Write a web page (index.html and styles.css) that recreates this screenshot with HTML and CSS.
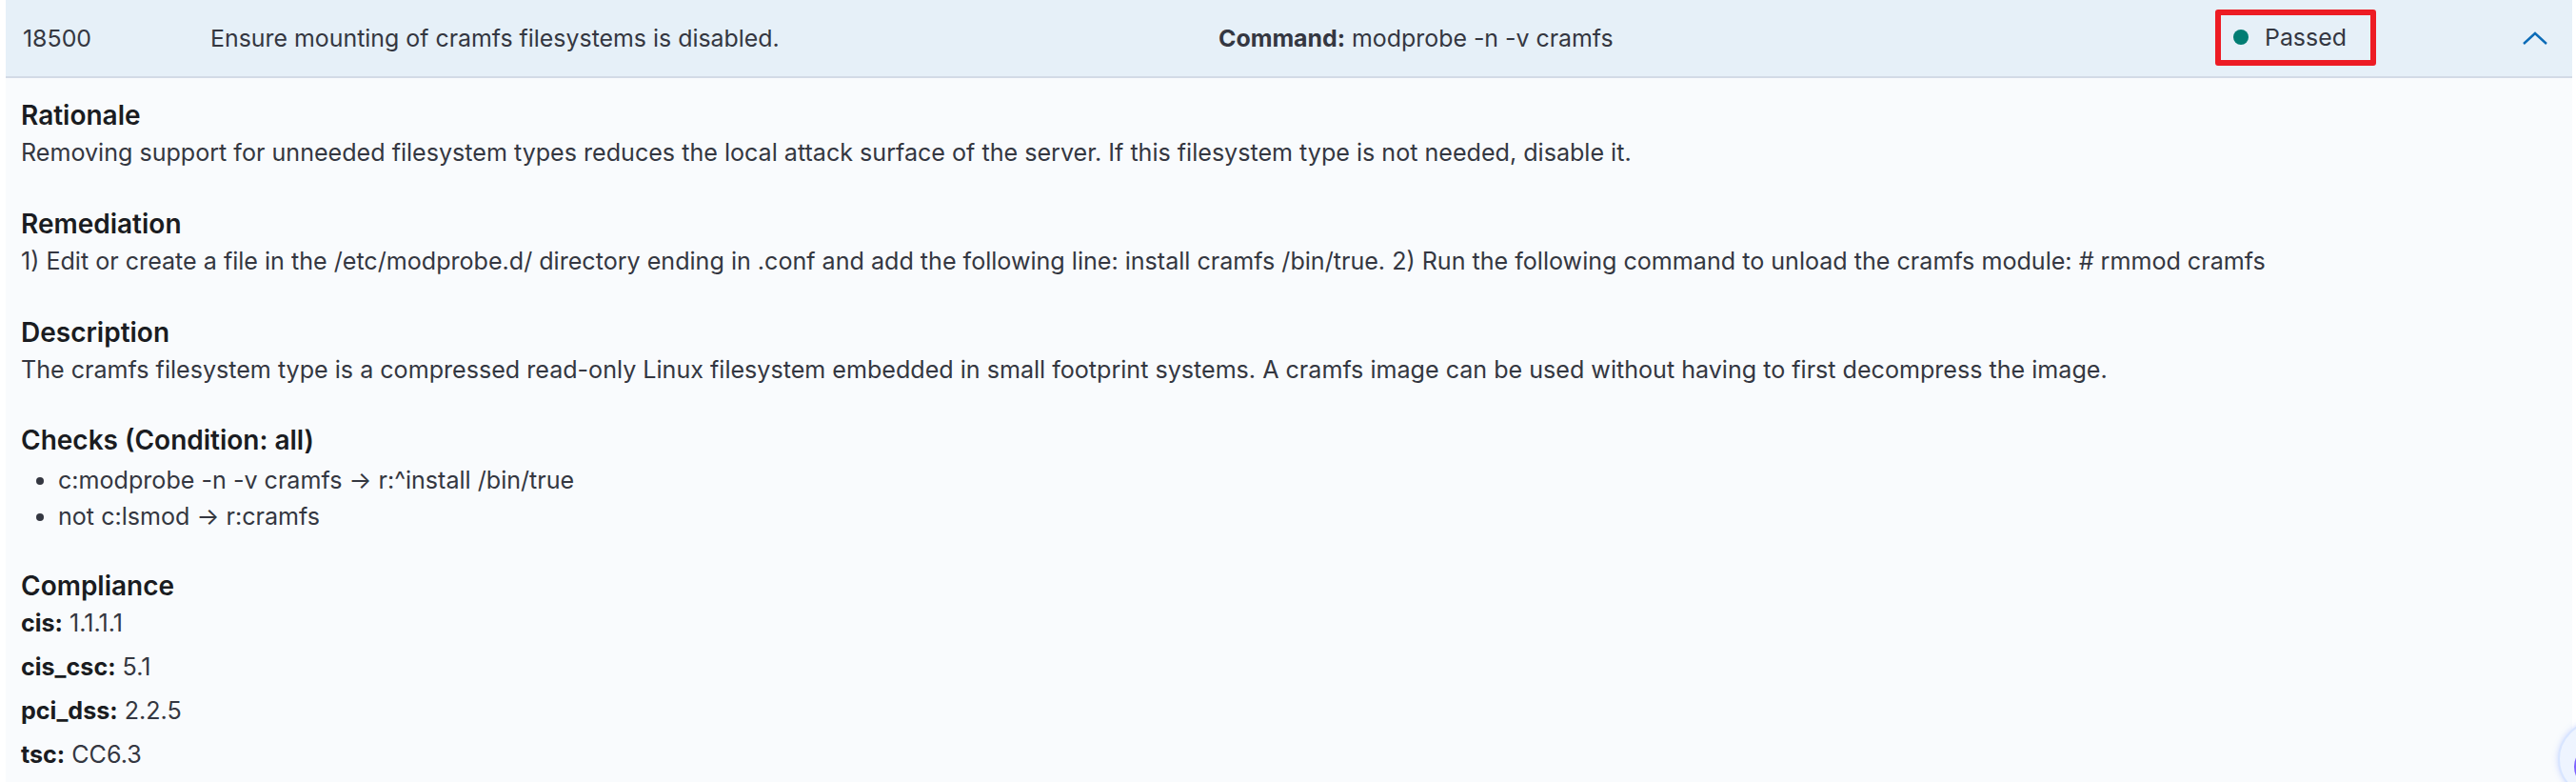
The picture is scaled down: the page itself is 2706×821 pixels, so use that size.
FILE: index.html
```html
<!DOCTYPE html>
<html lang="en">
<head>
<meta charset="utf-8">
<title>SCA check 18500</title>
<link rel="stylesheet" href="styles.css">
</head>
<body>
<div class="page">
  <div class="panel">
    <div class="row-head">
      <div class="cell cell-id">18500</div>
      <div class="cell cell-title">Ensure mounting of cramfs filesystems is disabled.</div>
      <div class="cell cell-cmd"><b>Command:</b> modprobe -n -v cramfs</div>
      <div class="cell cell-status">
        <span class="status-box"><span class="dot"></span><span>Passed</span></span>
      </div>
      <div class="cell cell-toggle">
        <svg class="chev" width="26" height="14" viewBox="0 0 26 14"><path d="M1 13 L13 2 L25 13" fill="none" stroke="#0b6bb7" stroke-width="2.4"/></svg>
      </div>
    </div>
    <div class="details">
      <section class="sec">
        <h3>Rationale</h3>
        <p>Removing support for unneeded filesystem types reduces the local attack surface of the server. If this filesystem type is not needed, disable it.</p>
      </section>
      <section class="sec">
        <h3>Remediation</h3>
        <p>1) Edit or create a file in the /etc/modprobe.d/ directory ending in .conf and add the following line: install cramfs /bin/true. 2) Run the following command to unload the cramfs module: # rmmod cramfs</p>
      </section>
      <section class="sec">
        <h3>Description</h3>
        <p>The cramfs filesystem type is a compressed read-only Linux filesystem embedded in small footprint systems. A cramfs image can be used without having to first decompress the image.</p>
      </section>
      <section class="sec sec-checks">
        <h3>Checks (Condition: all)</h3>
        <ul class="checks">
          <li>c:modprobe -n -v cramfs → r:^install /bin/true</li>
          <li>not c:lsmod → r:cramfs</li>
        </ul>
      </section>
      <section class="sec sec-comp">
        <h3>Compliance</h3>
        <div class="comp"><b>cis:</b> 1.1.1.1</div>
        <div class="comp"><b>cis_csc:</b> 5.1</div>
        <div class="comp"><b>pci_dss:</b> 2.2.5</div>
        <div class="comp"><b>tsc:</b> CC6.3</div>
      </section>
    </div>
  </div>
  <div class="fab"><span class="fab-inner"></span></div>
</div>
</body>
</html>
```

FILE: styles.css
```css
html, body {
  margin: 0;
  padding: 0;
  background: #ffffff;
  overflow: hidden;
}
body {
  font-family: Inter, "Noto Sans", sans-serif;
  color: #343741;
  font-size: 25.1px;
}
.page {
  position: relative;
  width: 2706px;
  height: 821px;
  padding: 0 4px 0 6px;
  box-sizing: border-box;
  overflow: hidden;
}
.panel {
  background: #f9fbfd;
  height: 100%;
}
.row-head {
  display: grid;
  grid-template-columns: 197px 1059px 1047px 323px 1fr;
  align-items: center;
  height: 80px;
  padding-left: 18px;
  background: #e6f0f8;
  border-bottom: 2px solid #d3dae6;
  font-size: 24.9px;
}
.cell { white-space: nowrap; }
.cell-cmd b { font-weight: 700; color: #343741; }
.status-box {
  display: inline-flex;
  align-items: center;
  gap: 17px;
  height: 59px;
  box-sizing: border-box;
  padding: 0 25px 0 13px;
  border: 6px solid #ed1c24;
  border-radius: 3px;
  margin-top: -2px;
}
.dot {
  width: 16px;
  height: 16px;
  border-radius: 50%;
  background: #017d73;
}
.cell-toggle { display: flex; align-items: center; }
.chev { display: block; }
.details {
  padding: 18px 16px 0 16px;
}
.sec { margin-bottom: 35px; }
.sec-checks { margin-bottom: 33px; }
.sec h3 {
  margin: 0;
  font-size: 28px;
  line-height: 42px;
  font-weight: 600;
  color: #1a1c21;
}
.sec p {
  margin: 0;
  line-height: 36.75px;
}
.checks {
  margin: 2px 0 0 0;
  padding-left: 39px;
}
.checks li {
  line-height: 38px;
}
.comp {
  line-height: 36.75px;
  margin-bottom: 9px;
}
.comp b { font-weight: 700; color: #1a1c21; }
.fab {
  position: absolute;
  left: 2687px;
  top: 757px;
  width: 80px;
  height: 80px;
  border-radius: 50%;
  background: #eef4ff;
  border: 2px solid #d8e5ff;
  box-shadow: 0 0 6px rgba(120, 150, 255, 0.35);
  box-sizing: border-box;
}
.fab-inner {
  position: absolute;
  left: 15px;
  top: 22px;
  width: 48px;
  height: 48px;
  border-radius: 50%;
  background: #7b61ff;
}
```
